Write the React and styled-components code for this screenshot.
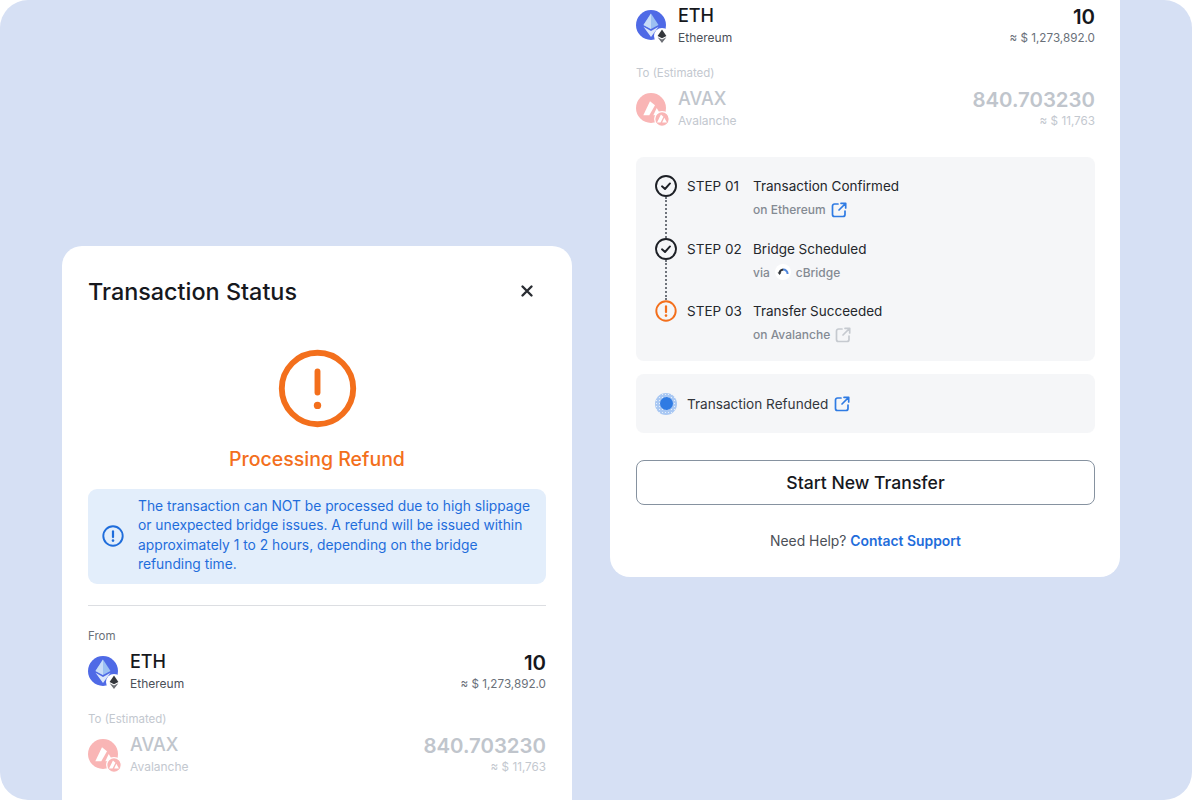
import React from 'react'
import styled, { createGlobalStyle } from 'styled-components'

const GlobalStyle = createGlobalStyle`
  html, body { margin: 0; padding: 0; background: #fff; }
  body { font-family: "Inter", "Open Sans", "Liberation Sans", sans-serif; }
  * { box-sizing: border-box; }
`

const Stage = styled.div`
  width: 1192px;
  height: 800px;
  background: #d6e0f4;
  border-radius: 28px;
  overflow: hidden;
  display: flex;
  gap: 38px;
  padding-left: 62px;
`

const LeftCard = styled.section`
  width: 510px;
  height: 554px;
  margin-top: 246px;
  padding: 30px 26px 0;
  background: #fff;
  border-radius: 20px 20px 0 0;
`

/* top of this card runs off the page */
const RightCard = styled.section`
  width: 510px;
  height: 579px;
  margin-top: -2px;
  padding: 0 25px 0 26px;
  background: #fff;
  border-radius: 0 0 20px 20px;
`

const Header = styled.div`
  display: flex;
  justify-content: space-between;
  align-items: center;
  height: 30px;
  padding-right: 12px;
`

const Title = styled.h1`
  margin: 0;
  font-size: 23.4px;
  font-weight: 500;
  color: #16181d;
`

const Status = styled.div`
  display: flex;
  flex-direction: column;
  align-items: center;
  margin-top: 42px;
`

const StatusText = styled.div`
  margin-top: 16px;
  font-size: 19.5px;
  line-height: 28px;
  font-weight: 500;
  color: #f36f1c;
`

const Notice = styled.div`
  display: flex;
  align-items: center;
  gap: 14px;
  height: 95px;
  margin-top: 16px;
  padding: 0 10px 2px 14px;
  background: #e3eefb;
  border-radius: 9px;
  color: #1f6ddb;
  font-size: 13.8px;
  line-height: 19.4px;
`

const Divider = styled.hr`
  margin: 21px 0 22px;
  border: 0;
  border-top: 1px solid #dcdee2;
`

const Label = styled.div`
  font-size: 11.5px;
  line-height: 16px;
  color: ${p => (p.$muted ? '#c3c8cf' : '#6a7079')};
`

const TokenRow = styled.div`
  display: flex;
  align-items: center;
  justify-content: space-between;
  height: 44px;
  margin-top: 5px;
  margin-bottom: 18px;
`

const TokenInfo = styled.div`
  display: flex;
  align-items: center;
  gap: 12px;
`

const TokenNames = styled.div`
  display: flex;
  flex-direction: column;
  padding-top: 1px;
`

const Symbol = styled.div`
  font-size: 18px;
  line-height: 24px;
  font-weight: 500;
  color: ${p => (p.$muted ? '#c0c5cc' : '#16181d')};
`

const Chain = styled.div`
  font-size: 12px;
  line-height: 20px;
  color: ${p => (p.$muted ? '#c3c8cf' : '#4b5058')};
`

const Amounts = styled.div`
  display: flex;
  flex-direction: column;
  align-items: flex-end;
  padding-top: 2px;
`

const Amount = styled.div`
  font-size: 20.4px;
  line-height: 24px;
  font-weight: 600;
  color: ${p => (p.$muted ? '#c0c5cc' : '#16181d')};
`

const Fiat = styled.div`
  font-size: 11.7px;
  line-height: 19px;
  color: ${p => (p.$muted ? '#c3c8cf' : '#6a7079')};
`

const IconWrap = styled.div`
  position: relative;
  width: 30px;
  height: 30px;
  flex: none;
`

const Badge = styled.span`
  position: absolute;
  right: -4px;
  bottom: -4px;
  width: 16px;
  height: 16px;
  display: flex;
`

const Panel = styled.div`
  background-color: #f5f6f8;
  background-image: radial-gradient(#eeeff2 0.6px, transparent 0.6px);
  background-size: 4px 4px;
  border-radius: 8px;
`

const StepsPanel = styled(Panel)`
  margin-top: 27px;
  padding: 18px 18px 0 19px;
  height: 204px;
`

const Step = styled.div`
  display: grid;
  grid-template-columns: 22px 56px 1fr;
  column-gap: 10px;
  height: 62.5px;
`

const Rail = styled.div`
  display: flex;
  flex-direction: column;
  align-items: center;
`

const Connector = styled.div`
  flex: 1;
  border-left: 2px dotted #6f747c;
`

const StepNo = styled.div`
  font-size: 13.5px;
  line-height: 22px;
  color: #24272c;
  white-space: nowrap;
`

const StepTitle = styled.div`
  font-size: 13.5px;
  line-height: 22px;
  color: #24272c;
`

const StepSub = styled.div`
  display: flex;
  align-items: center;
  gap: 5px;
  margin-top: 1.5px;
  height: 22px;
  font-size: 12px;
  font-weight: 500;
  color: #848a93;
`

const RefundPanel = styled(Panel)`
  display: flex;
  align-items: center;
  gap: 6px;
  height: 59px;
  margin-top: 13px;
  padding-left: 19px;
  font-size: 13.6px;
  color: #33363c;
`

const Pulse = styled.span`
  width: 22px;
  height: 22px;
  margin-right: 4px;
  border-radius: 50%;
  display: flex;
  align-items: center;
  justify-content: center;
  background-color: #a9c8f3;
  background-image: radial-gradient(#e4eefc 0.7px, transparent 0.7px);
  background-size: 3px 3px;
`

const PulseDot = styled.span`
  width: 13px;
  height: 13px;
  border-radius: 50%;
  background: #2f7be3;
`

const PrimaryButton = styled.button`
  display: block;
  width: 100%;
  height: 45px;
  margin-top: 27px;
  padding-bottom: 2px;
  background: #fff;
  border: 1px solid #8692a0;
  border-radius: 8px;
  font-family: inherit;
  font-size: 17.6px;
  font-weight: 500;
  color: #16181d;
`

const Help = styled.div`
  margin-top: 26px;
  text-align: center;
  font-size: 13.9px;
  line-height: 20px;
  color: #4b5058;
`

const SupportLink = styled.a`
  color: #1f6ddb;
  font-weight: 600;
`

const AlertSvg = styled.svg`
  flex: none;
`

const EthIcon = () => (
  <IconWrap>
    <svg width="30" height="30" viewBox="0 0 30 30">
      <circle cx="15" cy="15" r="15" fill="#4f6ae6" />
      <path d="M15 3.5 L7.5 15 L15 19 L22.5 15 Z" fill="#9cc0f2" />
      <path d="M15 3.5 L15 19 L7.5 15 Z" fill="#c8dcf8" />
      <path d="M7.5 16.8 L15 21 L22.5 16.8 L15 27 Z" fill="#dbe7fb" />
    </svg>
    <Badge>
      <svg width="16" height="16" viewBox="0 0 16 16">
        <circle cx="8" cy="8" r="8" fill="#fff" />
        <path d="M8 1.5 L3.6 8 L8 10.2 L12.4 8 Z" fill="#33363b" />
        <path d="M3.6 9.3 L8 11.5 L12.4 9.3 L8 15 Z" fill="#6d7076" />
      </svg>
    </Badge>
  </IconWrap>
)

const AvaxIcon = () => (
  <IconWrap>
    <svg width="30" height="30" viewBox="0 0 30 30">
      <circle cx="15" cy="15" r="15" fill="#f9b5b5" />
      <path d="M14 8.3 L19 12.3 L13.3 22.3 L7.3 22.3 Z" fill="#fff" />
      <path d="M20.7 15 L25 22.3 L17.3 22.3 Z" fill="#fff" />
    </svg>
    <Badge>
      <svg width="16" height="16" viewBox="-1 -1 18 18">
        <circle cx="8" cy="8" r="8.2" fill="#f9b5b5" stroke="#fff" strokeWidth="1.4" />
        <path d="M6.8 3 L9.6 5.4 L6.4 12 L2.4 12 Z" fill="#fff" />
        <path d="M10.6 6.6 L13.6 12 L8.2 12 Z" fill="#fff" />
      </svg>
    </Badge>
  </IconWrap>
)

const CheckCircle = () => (
  <svg width="22" height="22" viewBox="0 0 22 22" fill="none">
    <circle cx="11" cy="11" r="10" stroke="#1d2026" strokeWidth="1.9" />
    <path d="M7 11.3 L10 14 L15 8.4" stroke="#1d2026" strokeWidth="1.9" strokeLinecap="round" strokeLinejoin="round" />
  </svg>
)

const AlertCircle = ({ size, color, stroke, mark = stroke, dot = 1 }) => (
  <AlertSvg width={size} height={size} viewBox="0 0 22 22" fill="none">
    <circle cx="11" cy="11" r="9.7" stroke={color} strokeWidth={stroke} />
    <path d="M11 6.4 L11 12.1" stroke={color} strokeWidth={mark} strokeLinecap="round" />
    <circle cx="11" cy="15.6" r={dot} fill={color} />
  </AlertSvg>
)

const ExternalLink = ({ color }) => (
  <svg width="16" height="16" viewBox="0 0 16 16" fill="none">
    <path d="M7 2 H3.5 A2 2 0 0 0 1.5 4 V12.5 A2 2 0 0 0 3.5 14.5 H12 A2 2 0 0 0 14 12.5 V9" stroke={color} strokeWidth="1.7" strokeLinecap="round" />
    <path d="M8 8 L14.5 1.5 M10 1.3 H14.7 V6" stroke={color} strokeWidth="1.7" strokeLinecap="round" strokeLinejoin="round" />
  </svg>
)

const CBridgeIcon = () => (
  <svg width="16" height="16" viewBox="0 0 16 16" fill="none">
    <circle cx="8" cy="8" r="8" fill="#fff" />
    <path d="M8 5.6 A4.4 4.4 0 0 1 12.6 10" stroke="#4f86dc" strokeWidth="2" />
    <path d="M8.2 5.6 A4.4 4.4 0 0 0 4.4 9" stroke="#33363c" strokeWidth="2" />
    <path d="M2.6 8.4 L6.4 8.6 L4.6 11 Z" fill="#33363c" />
  </svg>
)

const CloseIcon = () => (
  <svg width="14" height="14" viewBox="0 0 14 14" fill="none">
    <path d="M2.5 2.5 L11.5 11.5 M11.5 2.5 L2.5 11.5" stroke="#2a2d33" strokeWidth="2.4" strokeLinecap="round" />
  </svg>
)

const TransferTokens = ({ showFrom }) => (
  <>
    {showFrom && <Label>From</Label>}
    <TokenRow>
      <TokenInfo>
        <EthIcon />
        <TokenNames>
          <Symbol>ETH</Symbol>
          <Chain>Ethereum</Chain>
        </TokenNames>
      </TokenInfo>
      <Amounts>
        <Amount>10</Amount>
        <Fiat>≈ $ 1,273,892.0</Fiat>
      </Amounts>
    </TokenRow>
    <Label $muted>To (Estimated)</Label>
    <TokenRow>
      <TokenInfo>
        <AvaxIcon />
        <TokenNames>
          <Symbol $muted>AVAX</Symbol>
          <Chain $muted>Avalanche</Chain>
        </TokenNames>
      </TokenInfo>
      <Amounts>
        <Amount $muted>840.703230</Amount>
        <Fiat $muted>≈ $ 11,763</Fiat>
      </Amounts>
    </TokenRow>
  </>
)

export default function App() {
  return (
    <>
      <GlobalStyle />
      <Stage>
        <LeftCard>
          <Header>
            <Title>Transaction Status</Title>
            <CloseIcon />
          </Header>
          <Status>
            <AlertCircle size={81} color="#f36f1c" stroke={1.6} />
            <StatusText>Processing Refund</StatusText>
          </Status>
          <Notice>
            <AlertCircle size={22} color="#1f6ddb" stroke={1.9} mark={2.2} dot={1.3} />
            <div>
              The transaction can NOT be processed due to high slippage or unexpected bridge issues. A refund
              will be issued within approximately 1 to 2 hours, depending on the bridge refunding time.
            </div>
          </Notice>
          <Divider />
          <TransferTokens showFrom />
        </LeftCard>
        <RightCard>
          <TransferTokens />
          <StepsPanel>
            <Step>
              <Rail>
                <CheckCircle />
                <Connector />
              </Rail>
              <StepNo>STEP 01</StepNo>
              <div>
                <StepTitle>Transaction Confirmed</StepTitle>
                <StepSub>on Ethereum <ExternalLink color="#2f7be3" /></StepSub>
              </div>
            </Step>
            <Step>
              <Rail>
                <CheckCircle />
                <Connector />
              </Rail>
              <StepNo>STEP 02</StepNo>
              <div>
                <StepTitle>Bridge Scheduled</StepTitle>
                <StepSub>via <CBridgeIcon /> cBridge</StepSub>
              </div>
            </Step>
            <Step>
              <Rail>
                <AlertCircle size={22} color="#f36f1c" stroke={1.9} mark={2.2} dot={1.3} />
              </Rail>
              <StepNo>STEP 03</StepNo>
              <div>
                <StepTitle>Transfer Succeeded</StepTitle>
                <StepSub>on Avalanche <ExternalLink color="#c6cad0" /></StepSub>
              </div>
            </Step>
          </StepsPanel>
          <RefundPanel>
            <Pulse><PulseDot /></Pulse>
            Transaction Refunded
            <ExternalLink color="#2f7be3" />
          </RefundPanel>
          <PrimaryButton>Start New Transfer</PrimaryButton>
          <Help>Need Help? <SupportLink>Contact Support</SupportLink></Help>
        </RightCard>
      </Stage>
    </>
  )
}
